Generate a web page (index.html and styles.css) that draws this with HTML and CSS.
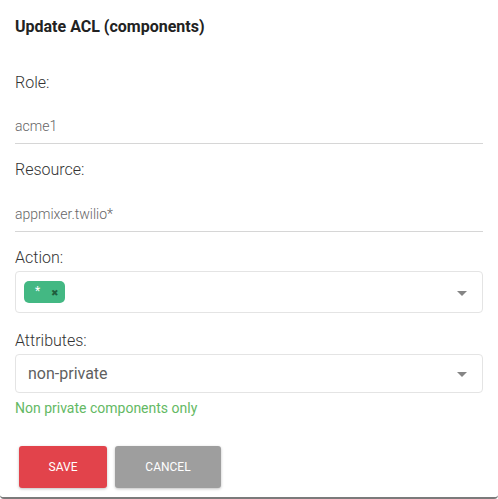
FILE: index.html
```html
<!DOCTYPE html>
<html>
<head>
<meta charset="utf-8">
<link rel="stylesheet" href="styles.css">
</head>
<body>
<div class="panel">
  <h1 class="title">Update ACL (components)</h1>

  <div class="field field-first">
    <div class="label">Role:</div>
    <div class="text-input">acme1</div>
  </div>

  <div class="field">
    <div class="label">Resource:</div>
    <div class="text-input">appmixer.twilio*</div>
  </div>

  <div class="field">
    <div class="label">Action:</div>
    <div class="select select-multi">
      <div class="values">
        <span class="chip"><span class="chip-text">*</span><span class="chip-x">&#x2716;</span></span>
      </div>
      <span class="arrow"></span>
    </div>
  </div>

  <div class="field field-attr">
    <div class="label">Attributes:</div>
    <div class="select">
      <div class="values value-text">non-private</div>
      <span class="arrow"></span>
    </div>
    <div class="hint">Non private components only</div>
  </div>

  <div class="actions">
    <button class="btn btn-save">SAVE</button>
    <button class="btn btn-cancel">CANCEL</button>
  </div>
</div>
</body>
</html>
```

FILE: styles.css
```css
* { box-sizing: border-box; }
html, body { margin: 0; padding: 0; background: #fff; }
body {
  font-family: Roboto, "Liberation Sans", Arial, sans-serif;
  width: 498px;
  height: 499px;
  overflow: hidden;
}
.panel {
  height: 499px;
  padding: 16px 15px 0 15px;
  border-bottom: 2px solid #7b7b7b;
  border-radius: 0 0 4px 4px;
}
.title {
  margin: 0;
  font-size: 16px;
  font-weight: 700;
  line-height: 21px;
  color: #222;
}
.field { margin-top: 16px; }
.field-first { margin-top: 36px; }
.label {
  font-size: 16px;
  font-weight: 300;
  line-height: 20px;
  color: #333;
}
.text-input {
  width: 468px;
  height: 52px;
  display: flex;
  align-items: flex-end;
  padding-bottom: 9px;
  font-size: 14px;
  line-height: 16px;
  font-weight: 300;
  color: #666;
  border-bottom: 1px solid #d6d6d6;
}
.field-first .text-input { height: 51px; }
.select {
  margin-top: 3px;
  width: 468px;
  border: 1px solid #e4e4e4;
  border-radius: 4px;
  display: flex;
  align-items: center;
  justify-content: space-between;
  height: 39px;
  padding: 0 15px 0 12px;
}
.select-multi { height: 42px; padding-left: 8px; }
.values { display: flex; align-items: center; }
.value-text {
  font-size: 16px;
  color: #5f5f5f;
  font-weight: 400;
}
.chip {
  display: inline-flex;
  align-items: center;
  width: 41px;
  height: 22px;
  background: #43b883;
  border-radius: 5px;
  padding-left: 11px;
}
.chip-text {
  color: #fff;
  font-size: 12px;
  line-height: 1;
  margin-top: -3px;
}
.chip-x {
  color: #1f5e3e;
  font-size: 9px;
  margin-left: 11px;
  line-height: 1;
  margin-top: 2px;
}
.arrow {
  width: 0;
  height: 0;
  border-left: 5px solid transparent;
  border-right: 5px solid transparent;
  border-top: 5px solid #858585;
  margin-top: 2px;
}
.field-attr { margin-top: 18px; }
.hint {
  margin-top: 7px;
  font-size: 14px;
  line-height: 16px;
  color: #64b964;
  font-weight: 400;
}
.actions {
  margin-top: 30px;
  padding-left: 4px;
  display: flex;
  gap: 8px;
}
.btn {
  height: 42px;
  border: none;
  border-radius: 3px;
  color: #fff;
  font-family: Roboto, "Liberation Sans", Arial, sans-serif;
  font-size: 12px;
  font-weight: 400;
  box-shadow: 0 1px 3px rgba(0,0,0,0.25);
  padding: 0;
}
.btn-save { width: 88px; background: #e2434b; }
.btn-cancel { width: 106px; background: #9e9e9e; }
```
